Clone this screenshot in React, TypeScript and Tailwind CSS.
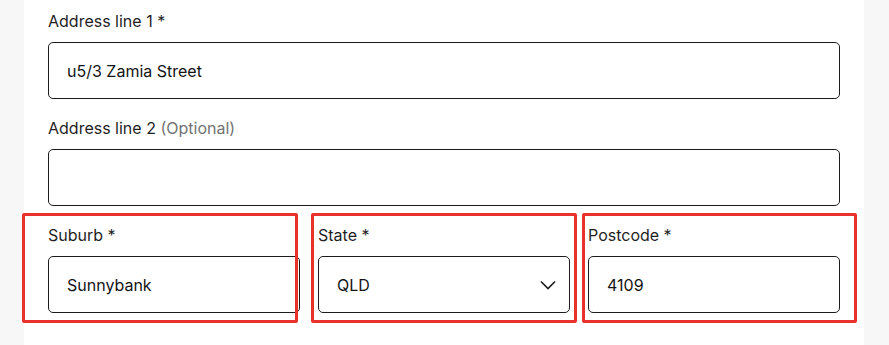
import React from 'react';

const font = { fontFamily: 'Inter, "Noto Sans", sans-serif' };

interface FieldProps {
  label: string;
  optional?: boolean;
  value?: string;
  select?: boolean;
}

const Field: React.FC<FieldProps> = ({ label, optional, value = '', select }) => (
  <div className="flex flex-col">
    <label className="h-[22px] mb-[10px] text-[16px] leading-[22px] text-[#1f1f1f]">
      {label}
      {optional ? <span className="text-[#737373]"> (Optional)</span> : ' *'}
    </label>
    <div className="relative h-[57px] rounded-[5px] border border-[#1c1c1c] bg-white flex items-center pl-[18px] pr-4">
      <span className="text-[16px] text-[#141414]">{value}</span>
      {select && (
        <svg
          className="absolute right-[13px] top-1/2 -translate-y-1/2"
          width="16"
          height="10"
          viewBox="0 0 16 10"
          fill="none"
        >
          <path d="M1 1.5L8 8.5L15 1.5" stroke="#1c1c1c" strokeWidth="1.6" />
        </svg>
      )}
    </div>
  </div>
);

const App: React.FC = () => {
  return (
    <div className="w-[889px] h-[345px] bg-[#f7f7f7] flex" style={font}>
      <div className="relative ml-[24px] w-[840px] h-full bg-white pt-[10px] px-[24px]">
        <div className="flex flex-col gap-[18px]">
          <Field label="Address line 1" value="u5/3 Zamia Street" />
          <Field label="Address line 2" optional />
          <div className="grid grid-cols-3 gap-[18px]">
            <Field label="Suburb" value="Sunnybank" />
            <Field label="State" value="QLD" select />
            <Field label="Postcode" value="4109" />
          </div>
        </div>

        {/* annotation boxes */}
        <div className="absolute left-[-2px] top-[213px] w-[276px] h-[110px] border-[3px] border-[#e8322b] rounded-[2px]" />
        <div className="absolute left-[287px] top-[213px] w-[266px] h-[110px] border-[3px] border-[#e8322b] rounded-[2px]" />
        <div className="absolute left-[558px] top-[213px] w-[275px] h-[110px] border-[3px] border-[#e8322b] rounded-[2px]" />
      </div>
    </div>
  );
};

export default App;
